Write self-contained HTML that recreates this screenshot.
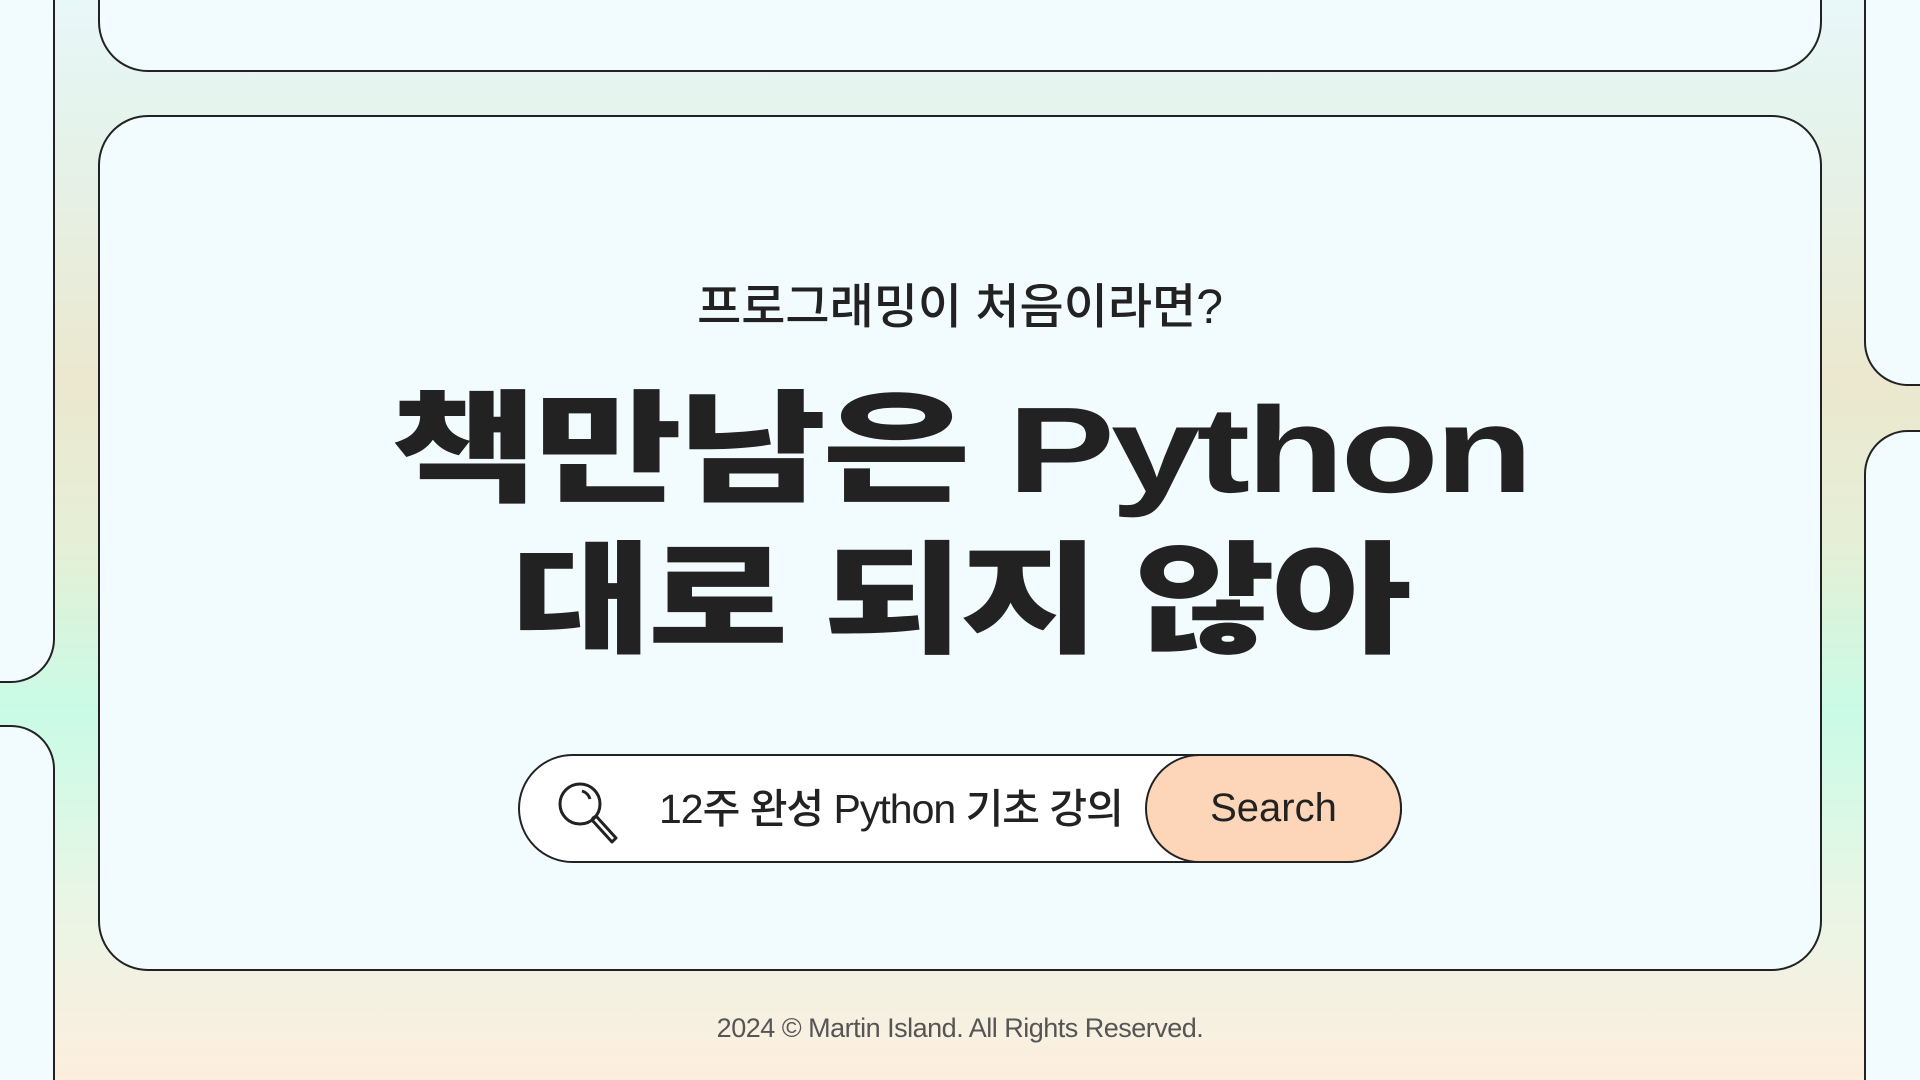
<!DOCTYPE html>
<html><head><meta charset="utf-8"><style>
*{margin:0;padding:0;box-sizing:border-box}
html,body{width:1920px;height:1080px;overflow:hidden}
body{position:relative;
background:linear-gradient(180deg,#e8f7f8 0%,#e5f3ec 12%,#ebe8cf 35%,#e6efd6 50%,#c9fbe6 66%,#e7f6e6 82%,#fdeede 100%);
font-family:"Liberation Sans","Noto Sans CJK KR",sans-serif;color:#222}
.p{position:absolute;background:#f2fbfd;border:2px solid #222}
.t{position:absolute;left:0;width:1920px;text-align:center}
.h{display:inline-block;font-size:122px;font-weight:900;line-height:136px;letter-spacing:-3px}
</style></head><body>
<div class="p" style="left:0;top:0;width:55px;height:683px;border-top:0;border-left:0;border-radius:0 0 44px 0"></div>
<div class="p" style="left:0;top:725px;width:55px;height:355px;border-bottom:0;border-left:0;border-radius:0 44px 0 0"></div>
<div class="p" style="left:1864px;top:0;width:56px;height:386px;border-top:0;border-right:0;border-radius:0 0 0 44px"></div>
<div class="p" style="left:1864px;top:430px;width:56px;height:650px;border-bottom:0;border-right:0;border-radius:44px 0 0 0"></div>
<div class="p" style="left:98px;top:0;width:1724px;height:72px;border-top:0;border-radius:0 0 50px 50px"></div>
<div class="p" style="left:98px;top:115px;width:1724px;height:856px;border-radius:50px"></div>
<div class="t" style="top:278px;font-size:48px;font-weight:500;line-height:60px">프로그래밍이 처음이라면?</div>
<div class="t" style="top:382px"><span class="h" style="transform:scaleX(1.32)">책만남은 Python</span></div>
<div class="t" style="top:533px"><span class="h" style="transform:scaleX(1.25)">대로 되지 않아</span></div>
<div style="position:absolute;left:518px;top:754px;width:884px;height:109px;border:2px solid #222;border-radius:55px;background:#fff"></div>
<svg style="position:absolute;left:556px;top:780px" width="64" height="64" viewBox="0 0 64 64" fill="none" stroke="#222" stroke-width="3">
<circle cx="24" cy="24" r="20"/><path d="M26 11a12 12 0 0 1 8 8"/><path d="M37 38l3-2 20 22-4 4-20-22z" stroke-linejoin="round"/></svg>
<div style="position:absolute;left:659px;top:781px;font-size:41px;line-height:56px;font-weight:500;letter-spacing:-1px">12주 완성 Python 기초 강의</div>
<div style="position:absolute;left:1145px;top:754px;width:257px;height:109px;border:2px solid #222;border-radius:55px;background:#fdd5b8;font-size:40px;line-height:105px;text-align:center;font-weight:500">Search</div>
<div class="t" style="top:1011px;font-size:27px;line-height:34px;color:#555;letter-spacing:-0.5px">2024 © Martin Island. All Rights Reserved.</div>
</body></html>
